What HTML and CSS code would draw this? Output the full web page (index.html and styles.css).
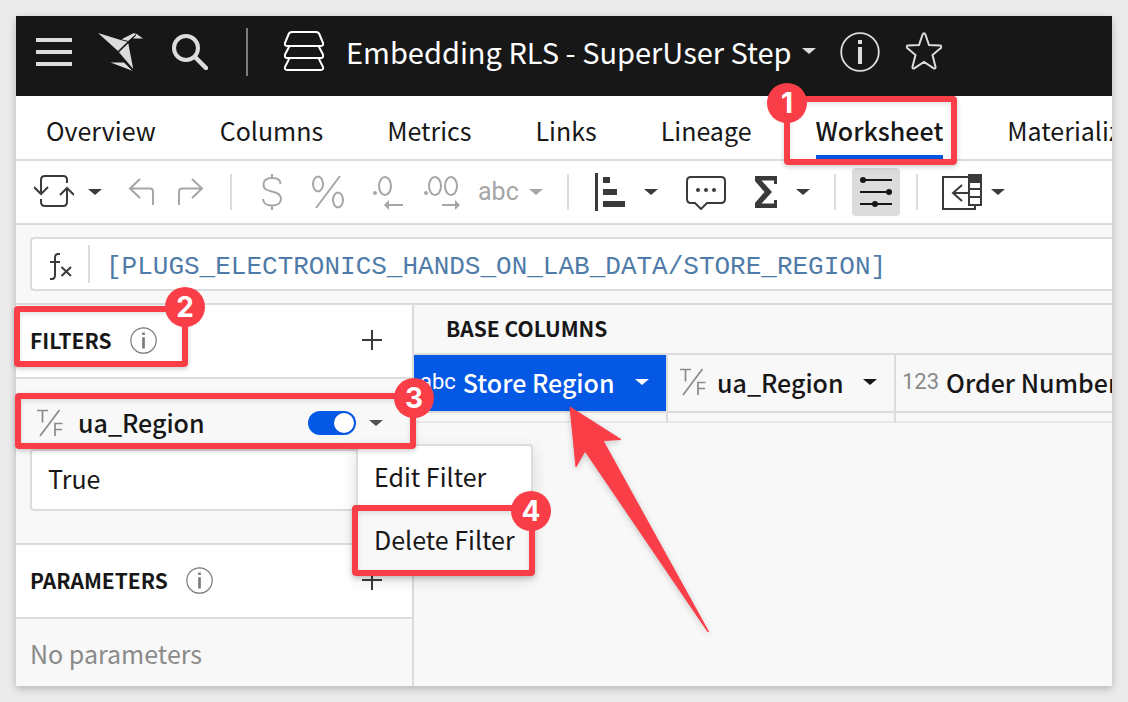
FILE: index.html
```html
<!DOCTYPE html>
<html lang="en">
<head>
<meta charset="utf-8">
<title>Embedding RLS - SuperUser Step</title>
<link rel="stylesheet" href="styles.css">
</head>
<body>
<svg class="defs" aria-hidden="true">
  <symbol id="caret" viewBox="0 0 14 8"><path d="M0 1h14L7 7z"/></symbol>
  <symbol id="plus" viewBox="0 0 20 20"><path d="M10 0v20M0 10h20" stroke="currentColor" stroke-width="2" fill="none"/></symbol>
  <symbol id="info" viewBox="0 0 40 40"><circle cx="20" cy="20" r="18.8" fill="none" stroke="currentColor" stroke-width="1.8"/><path d="M18 8h4v4h-4zM18 15h4v17h-4z" fill="currentColor"/></symbol>
  <symbol id="tf" viewBox="0 0 28 28"><path d="M1 1.500h11M6.500 1.500v12M4 27L23.500 1M19 27V14.500h7.500M19 20.500h7" fill="none" stroke="currentColor" stroke-width="1.700"/></symbol>
</svg>

<main class="app">
  <header class="topbar">
    <button class="icon-btn" aria-label="Menu"><svg width="36" height="28" viewBox="0 0 36 28"><path d="M0 2h36M0 14h36M0 26h36" stroke="#dcdcdc" stroke-width="4"/></svg></button>
    <a class="logo" href="#" aria-label="Home"><svg width="46" height="40" viewBox="0 0 46 40"><g fill="#dcdcdc"><path d="M0 1l23.500 7.200 6 1.600L20 19z"/><path d="M23.500 7.200L36 1l1.500 1.500-7.300 6.500z"/><path d="M37.200 1L45 6.500H35l3-3z"/><path d="M21 20.200l9.300-9L35.200 37z"/><path d="M12.500 30.500H26L35 39z"/></g><path d="M26.500 29.500l8 9" stroke="#171717" stroke-width="1"/></svg></a>
    <button class="icon-btn" aria-label="Search"><svg width="36" height="36" viewBox="0 0 36 36"><circle cx="14" cy="14" r="12" fill="none" stroke="#dcdcdc" stroke-width="4"/><path d="M23 23l11 11" stroke="#dcdcdc" stroke-width="4.500" stroke-linecap="round"/></svg></button>
    <span class="top-divider"></span>
    <svg class="dataset" width="40" height="42" viewBox="0 0 40 42" fill="none" stroke="#fff" stroke-width="2" stroke-linejoin="round"><path d="M8 1h24c2 0 3 1 3.500 2.500L39 12c.5 2-.5 3-2 3H3c-1.500 0-2.500-1-2-3L4.500 3.500C5 2 6 1 8 1z"/><path d="M5.500 15L1 23.500C.5 26 1.500 27 3 27h34c1.500 0 2.500-1 2-3.500L34.500 15M5.500 27L1 36c-.5 2 .5 3 2 3h34c1.500 0 2.500-1 2-3l-4.500-9"/></svg>
    <button class="title">Embedding RLS - SuperUser Step<svg class="caret" width="14" height="8"><use href="#caret"/></svg></button>
    <button class="icon-btn" aria-label="Details"><svg width="40" height="40"><use href="#info"/></svg></button>
    <button class="icon-btn" aria-label="Favorite"><svg width="36" height="40" viewBox="0 0 36 40"><path d="M16.600 2.500c.6-1.600 2.200-1.600 2.800 0L23 13l11 .5c1.500.2 1.900 1.600.8 2.600L26.500 23l3 11.800c.3 1.400-.9 2.200-2.100 1.400L18 30l-9.400 6.200c-1.200.8-2.400 0-2.100-1.400l3-11.800L1.200 16.100C.1 15.100.5 13.700 2 13.500L13 13z" fill="none" stroke="#dcdcdc" stroke-width="2"/></svg></button>
  </header>

  <nav class="tabs">
    <a href="#">Overview</a>
    <a href="#">Columns</a>
    <a href="#">Metrics</a>
    <a href="#">Links</a>
    <a href="#">Lineage</a>
    <a href="#" class="active" aria-current="page">Worksheet</a>
    <a href="#">Materializations</a>
  </nav>

  <div class="toolbar" role="toolbar" aria-label="Worksheet tools">
    <button class="tool" aria-label="Refresh"><svg width="40" height="36" viewBox="0 0 40 36" fill="none" stroke="#3a3a3a" stroke-width="2"><path d="M7 19V6q0-4 4-4h18q4 0 4 4v3M0 13l7 7 7-7M33 15v13q0 4-4 4H11q-4 0-4-4v-3M26 21l7-7 7 7"/></svg><svg class="caret" width="14" height="8"><use href="#caret"/></svg></button>
    <button class="tool" aria-label="Undo"><svg width="28" height="28" viewBox="0 0 28 28" fill="none" stroke="#a6a6a6" stroke-width="2"><path d="M14 1L4 10.500 14 20M4 10.500h20q3 0 3 3V27"/></svg></button>
    <button class="tool" aria-label="Redo"><svg width="28" height="28" viewBox="0 0 28 28" fill="none" stroke="#a6a6a6" stroke-width="2"><path d="M14 1l10 9.500L14 20M24 10.500H4q-3 0-3 3V27"/></svg></button>
    <span class="divider"></span>
    <button class="tool" aria-label="Currency"><svg width="32" height="36" viewBox="0 0 32 36" fill="none" stroke="#a6a6a6" stroke-width="2"><path d="M16 0v5M16 31v5M24.500 10c0-4-3-6-8.500-6s-8.500 2-8.500 6.500c0 5 4 6 8.500 7 5 1 9 2.500 9 7.500 0 4-3.500 6.500-9 6.500s-9-2.500-9-6.500"/></svg></button>
    <button class="tool" aria-label="Percent"><svg width="32" height="34" viewBox="0 0 32 34" fill="none" stroke="#a6a6a6" stroke-width="2"><ellipse cx="6" cy="9" rx="5" ry="7.500"/><ellipse cx="26" cy="25" rx="5" ry="7.500"/><path d="M28 1L4 33"/></svg></button>
    <div class="format-group">
      <button class="tool" aria-label="Decrease decimals"><svg width="36" height="36" viewBox="0 0 36 36" fill="none" stroke="#a6a6a6" stroke-width="2"><ellipse cx="17" cy="12" rx="6" ry="9"/><circle cx="7" cy="19" r="2" fill="#a6a6a6" stroke="none"/><path d="M35 31H18"/><path d="M16 31l5-5v10z" fill="#a6a6a6" stroke="none"/></svg></button>
      <button class="tool" aria-label="Increase decimals"><svg width="38" height="36" viewBox="0 0 38 36" fill="none" stroke="#a6a6a6" stroke-width="2"><ellipse cx="13" cy="12" rx="6" ry="9"/><ellipse cx="29" cy="12" rx="6" ry="9"/><circle cx="4" cy="19" r="2" fill="#a6a6a6" stroke="none"/><path d="M20 31h16"/><path d="M38 31l-5-5v10z" fill="#a6a6a6" stroke="none"/></svg></button>
      <button class="tool text-format">abc<svg class="caret" width="14" height="8"><use href="#caret"/></svg></button>
    </div>
    <span class="divider"></span>
    <button class="tool align" aria-label="Align"><svg width="33" height="38" viewBox="0 0 33 38" fill="#3a3a3a"><path d="M2 0h3v38H2zM10 4h7v6h-7zM10 16h14v6H10zM10 28h22v6H10z"/></svg><svg class="caret" width="14" height="8"><use href="#caret"/></svg></button>
    <button class="tool" aria-label="Comment"><svg width="45" height="36" viewBox="0 0 45 36"><path d="M9 3h30q4 0 4 4v18q0 4-4 4H25l-6 6-6-6H9q-4 0-4-4V7q0-4 4-4z" fill="none" stroke="#3a3a3a" stroke-width="2"/><g fill="#3a3a3a"><circle cx="16" cy="16" r="2"/><circle cx="24" cy="16" r="2"/><circle cx="32" cy="16" r="2"/></g></svg></button>
    <button class="tool align" aria-label="Totals"><svg width="27" height="32" viewBox="0 0 27 32"><path d="M4 0h22v8h-3V4.500H10.500L21 16 10.500 27.500H23V24h3v8H4v-5l9.500-11L4 5z" fill="#3a3a3a"/></svg><svg class="caret" width="14" height="8"><use href="#caret"/></svg></button>
    <span class="divider"></span>
    <button class="tool toggled" aria-label="Controls" aria-pressed="true"><svg width="32" height="30" viewBox="0 0 32 30" fill="#171717"><path d="M0 2h32v2H0zM0 14h32v2H0zM0 26h32v2H0z"/><circle cx="3" cy="3" r="3"/><circle cx="29" cy="15" r="3"/><circle cx="15" cy="27" r="3"/></svg></button>
    <span class="divider"></span>
    <button class="tool collapse" aria-label="Collapse columns"><svg width="40" height="36" viewBox="0 0 40 36" fill="none" stroke="#3a3a3a" stroke-width="2"><path d="M27 3H1v32h32v-3"/><path d="M27 1h12v30H27zM27 8h12M27 15h12M27 23h12"/><path d="M26 0h14v8H26z" fill="#3a3a3a" stroke="none"/><path d="M27 19H11M20 11l-9 8 9 8"/></svg><svg class="caret" width="14" height="8"><use href="#caret"/></svg></button>
  </div>

  <div class="formula-bar">
    <div class="formula">
      <label for="formula" aria-label="Formula"><svg width="24" height="28" viewBox="0 0 24 28" fill="none" stroke="#3a3a3a" stroke-width="2"><path d="M11 1H9Q6 1 6 5v17q0 4-3 4H1M1 9h10M12.500 14l9.500 9M22 14l-9.500 9"/></svg></label>
      <input id="formula" type="text" value="[PLUGS_ELECTRONICS_HANDS_ON_LAB_DATA/STORE_REGION]">
    </div>
  </div>

  <div class="workspace">
    <aside class="sidebar">
      <section class="filters">
        <h2 class="panel-head">FILTERS <svg class="hint" width="27" height="27"><use href="#info"/></svg><button class="add" aria-label="Add filter"><svg width="20" height="20"><use href="#plus"/></svg></button></h2>
        <div class="filter">
          <div class="filter-head">
            <svg class="type" width="28" height="28"><use href="#tf"/></svg>
            <label for="region-on">ua_Region</label>
            <input id="region-on" class="switch" type="checkbox" role="switch" checked>
            <button class="more" aria-label="Filter menu"><svg class="caret" width="14" height="8"><use href="#caret"/></svg></button>
            <div class="menu" role="menu">
              <button role="menuitem">Edit Filter</button>
              <button role="menuitem" class="hover">Delete Filter</button>
            </div>
          </div>
          <div class="filter-value">True</div>
        </div>
      </section>
      <section class="parameters">
        <h2 class="panel-head">PARAMETERS <svg class="hint" width="27" height="27"><use href="#info"/></svg><button class="add" aria-label="Add parameter"><svg width="20" height="20"><use href="#plus"/></svg></button></h2>
        <p class="empty">No parameters</p>
      </section>
    </aside>

    <div class="grid">
      <table>
        <colgroup><col class="c-store"><col class="c-region"><col class="c-order"></colgroup>
        <thead>
          <tr class="group"><th colspan="3">BASE COLUMNS</th></tr>
          <tr class="cols">
            <th class="selected"><div class="col"><span class="kind">abc</span>Store Region<svg class="caret" width="14" height="8"><use href="#caret"/></svg></div></th>
            <th><div class="col"><svg class="type" width="28" height="28"><use href="#tf"/></svg>ua_Region<svg class="caret" width="14" height="8"><use href="#caret"/></svg></div></th>
            <th><div class="col"><span class="kind">123</span>Order Number</div></th>
          </tr>
        </thead>
        <tbody><tr><td></td><td></td><td></td></tr></tbody>
      </table>
    </div>
  </div>
</main>

<div class="mark mark-1"><b>1</b></div>
<div class="mark mark-2"><b>2</b></div>
<div class="mark mark-3"><b>3</b></div>
<div class="mark mark-4"><b>4</b></div>
<svg class="arrow" width="142" height="228" viewBox="0 0 142 228"><path d="M2 2L53 34.500 35 35.500 140.500 226.500 140 227 17 46 8 62z" fill="#fa3e48" stroke="#fa3e48" stroke-linejoin="round"/></svg>
</body>
</html>
```

FILE: styles.css
```css
* { box-sizing: border-box; }

body {
  position: relative;
  margin: 0;
  padding: 16px;
  min-height: 100vh;
  display: flex;
  overflow: hidden;
  background: #ebebeb;
  color: #171717;
  font-family: "Noto Sans CJK SC", "Noto Sans", sans-serif;
  font-size: 25px;
  line-height: 32px;
}

button {
  display: flex;
  align-items: center;
  padding: 0;
  border: 0;
  background: none;
  color: inherit;
  font: inherit;
}

a { color: inherit; text-decoration: none; }
svg { display: block; flex: none; }
.defs { position: absolute; width: 0; height: 0; }
.caret { fill: currentColor; }

.app {
  flex: 1;
  min-width: 0;
  display: flex;
  flex-direction: column;
  background: #f8f8f8;
  box-shadow: 0 3px 8px rgba(0, 0, 0, 0.22);
}

.topbar {
  display: flex;
  align-items: center;
  height: 80px;
  padding: 0 20px 8px;
  background: #171717;
  color: #dcdcdc;
}
.logo { margin: 0 28px 0 26px; }
.top-divider { width: 2px; height: 48px; margin: 0 36px 0 38px; background: #7c7c7c; }
.title { gap: 10px; margin: 0 24px 0 22px; padding-bottom: 2px; color: #fff; font-size: 29px; white-space: nowrap; }
.title .caret { color: #dcdcdc; }
.icon-btn + .icon-btn { margin-left: 26px; }

.tabs {
  display: flex;
  gap: 64px;
  height: 65px;
  padding: 0 30px;
  overflow: hidden;
  border-bottom: 2px solid #dcdcdc;
  background: #fff;
  white-space: nowrap;
}
.tabs a { padding-top: 18px; }
.tabs .active { border-bottom: 4px solid #0558e4; font-weight: 500; }

.toolbar {
  display: flex;
  align-items: center;
  gap: 24px;
  height: 64px;
  padding: 0 18px;
  border-bottom: 2px solid #dcdcdc;
  background: #fff;
  color: #3a3a3a;
}
.tool { gap: 14px; }
.tool.align { gap: 18px; }
.tool.collapse { gap: 9px; }
.tool.text-format { gap: 10px; color: #a6a6a6; font-family: Roboto, sans-serif; }
.tool.toggled { justify-content: center; width: 48px; height: 48px; margin: 0 -8px; border-radius: 4px; background: #dcdcdc; }
.format-group { display: flex; align-items: center; gap: 18px; }
.divider { width: 2px; height: 36px; background: #dcdcdc; }

.formula-bar { height: 80px; padding: 12px 0 12px 14px; border-bottom: 2px solid #dcdcdc; }
.formula {
  display: flex;
  height: 54px;
  border: 2px solid #dcdcdc;
  border-right: 0;
  border-radius: 4px 0 0 4px;
  background: #fff;
}
.formula label { display: flex; align-items: center; margin: 6px 0; padding: 6px 15px 0 17px; border-right: 2px solid #dcdcdc; }
.formula input {
  flex: 1;
  min-width: 0;
  padding: 5px 0 0 16px;
  border: 0;
  background: none;
  color: #4f7ba8;
  font: 26px "Liberation Mono", monospace;
}

.workspace { flex: 1; display: flex; min-height: 0; }

.sidebar { flex: none; width: 398px; border-right: 2px solid #dcdcdc; }
.panel-head {
  display: flex;
  align-items: center;
  height: 74px;
  margin: 0;
  padding: 0 30px 2px 14px;
  border-bottom: 2px solid #dcdcdc;
  background: #fff;
  font-size: 21px;
  font-weight: 700;
}
.hint { margin-left: 18px; color: #7c7c7c; }
.add { margin-left: auto; color: #3a3a3a; }

.filter { padding: 14px 14px 32px; }
.filter-head { position: relative; display: flex; align-items: center; height: 56px; padding: 4px 15px 0 6px; }
.type { color: #8a8a8a; }
.filter-head label { margin-left: 14px; padding-bottom: 2px; font-weight: 500; }
.switch {
  appearance: none;
  display: flex;
  justify-content: flex-end;
  align-items: center;
  width: 48px;
  height: 24px;
  margin: 0 13px 0 auto;
  padding: 2px;
  border-radius: 12px;
  background: #0558e4;
}
.switch::before { content: ""; width: 20px; height: 20px; border-radius: 50%; background: #fff; }
.more { color: #4f4f4f; }
.filter-value { height: 62px; padding: 11px 16px; border: 2px solid #dcdcdc; border-radius: 4px; background: #fff; }

.menu {
  position: absolute;
  z-index: 1;
  top: 51px;
  left: 326px;
  width: 177px;
  border: 2px solid #dcdcdc;
  border-radius: 4px;
  background: #fff;
  box-shadow: 0 6px 16px rgba(0, 0, 0, 0.14);
}
.menu button { width: 100%; height: 63px; padding: 0 16px 4px; white-space: nowrap; }
.menu .hover { background: #f8f8f8; }

.parameters { border-top: 2px solid #dcdcdc; }
.empty { margin: 0; padding: 18px 14px 16px; color: #8a8a8a; }

.grid { flex: 1; min-width: 0; overflow: hidden; }
table { width: 100%; border-collapse: separate; border-spacing: 0; table-layout: fixed; }
.c-store { width: 254px; }
.c-region { width: 228px; }
th { padding: 0; text-align: left; font-weight: 500; white-space: nowrap; border-bottom: 2px solid #dcdcdc; }
.group th { height: 50px; padding: 0 32px 2px; font-size: 21px; font-weight: 700; }
.cols th { height: 58px; border-right: 2px solid #dcdcdc; overflow: hidden; }
.col { display: flex; align-items: center; height: 56px; padding: 0 17px 3px 6px; }
.col .caret { margin-left: auto; }
.col .type { margin: 0 10px 0 5px; }
.kind { margin-right: 7px; color: #8a8a8a; font: 22px Roboto, sans-serif; }
.selected .col { background: #0558e4; color: #fff; }
.selected .kind { color: #fff; }
td { height: 10px; padding: 0; border-right: 2px solid #dcdcdc; border-bottom: 2px solid #e8e8e8; }
th:last-child, td:last-child { border-right: 0; }

/* Numbered callouts drawn over the app */
.mark {
  position: absolute;
  z-index: 2;
  border: 6px solid #fa3e48;
  border-radius: 4px;
  box-shadow: 0 2px 5px rgba(0, 0, 0, 0.2), inset 0 2px 5px rgba(0, 0, 0, 0.12);
}
.mark b {
  position: absolute;
  width: 40px;
  height: 40px;
  border-radius: 50%;
  background: #fa3e48;
  color: #fff;
  font: 700 28px/40px Inter, sans-serif;
  text-align: center;
}
.mark-1 { left: 784px; top: 96px; width: 173px; height: 69px; }
.mark-1 b { left: -23px; top: -19px; }
.mark-2 { left: 14px; top: 306px; width: 174px; height: 61px; }
.mark-2 b { right: -23px; top: -25px; }
.mark-3 { left: 15px; top: 393px; width: 401px; height: 56px; }
.mark-3 b { right: -24px; top: -21px; }
.mark-4 { left: 352px; top: 505px; width: 183px; height: 71px; }
.mark-4 b { right: -22px; top: -20px; }

.arrow { position: absolute; z-index: 2; left: 568px; top: 405px; filter: drop-shadow(0 2px 3px rgba(0, 0, 0, 0.2)); }
```
